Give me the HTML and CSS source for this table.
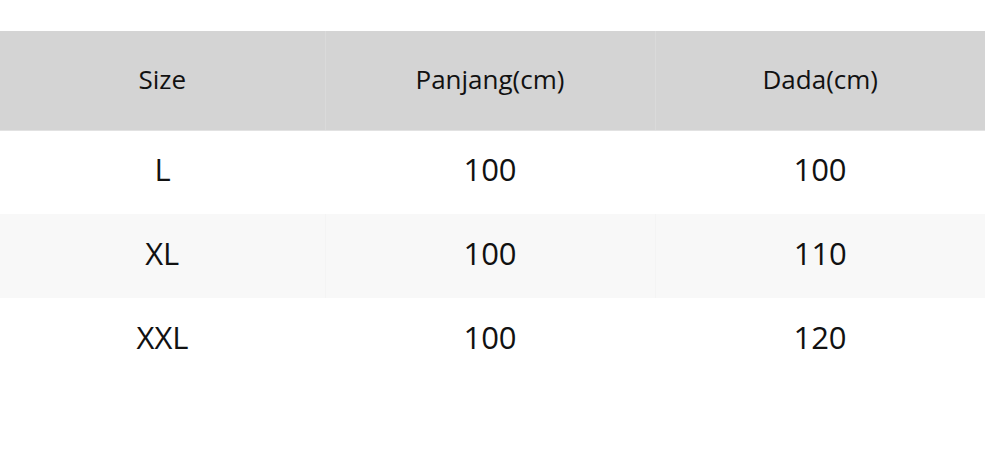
FILE: index.html
```html
<!DOCTYPE html>
<html>
<head>
<meta charset="utf-8">
<link rel="stylesheet" href="styles.css">
</head>
<body>
<table class="size-table">
  <thead>
    <tr class="head-row">
      <th class="c1">Size</th>
      <th class="c2">Panjang(cm)</th>
      <th class="c3">Dada(cm)</th>
    </tr>
  </thead>
  <tbody>
    <tr class="row"><td>L</td><td>100</td><td>100</td></tr>
    <tr class="row alt"><td>XL</td><td>100</td><td>110</td></tr>
    <tr class="row"><td>XXL</td><td>100</td><td>120</td></tr>
  </tbody>
</table>
</body>
</html>
```
FILE: styles.css
```css
html, body {
  margin: 0;
  padding: 0;
  background: #ffffff;
}
body {
  font-family: "Open Sans", "Noto Sans", sans-serif;
  color: #111111;
}
.size-table {
  margin-top: 31px;
  width: 985px;
  border-collapse: collapse;
  table-layout: fixed;
}
.c1 { width: 325px; }
.c2 { width: 330px; }
.c3 { width: 330px; }
.head-row th {
  height: 99px;
  padding: 0 0 3px 0;
  box-sizing: border-box;
  background: #d4d4d4;
  font-weight: 400;
  font-size: 26px;
  text-align: center;
  vertical-align: middle;
  border-right: 1px solid #dadada;
  border-bottom: 1px solid #e2e2e2;
}
.head-row th:last-child { border-right: none; }
.row td {
  height: 84px;
  padding: 0 0 6px 0;
  box-sizing: border-box;
  font-size: 31px;
  text-align: center;
  vertical-align: middle;
}
.row.alt td {
  background: #f8f8f8;
  border-right: 1px solid #f4f4f4;
}
.row.alt td:last-child { border-right: none; }
```
